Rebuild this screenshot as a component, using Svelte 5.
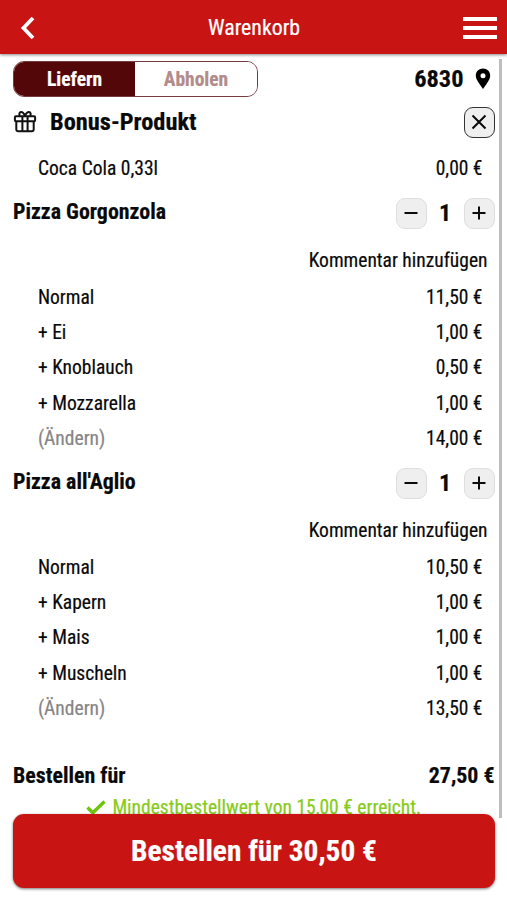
<script>
  const products = [
    { name: 'Pizza Gorgonzola', qty: 1, items: [['Normal', '11,50 €'], ['+ Ei', '1,00 €'], ['+ Knoblauch', '0,50 €'], ['+ Mozzarella', '1,00 €']], total: '14,00 €' },
    { name: "Pizza all'Aglio", qty: 1, items: [['Normal', '10,50 €'], ['+ Kapern', '1,00 €'], ['+ Mais', '1,00 €'], ['+ Muscheln', '1,00 €']], total: '13,50 €' }
  ];
</script>

<div class="app">
  <header>
    <svg class="back" width="16" height="24" viewBox="0 0 16 24"><path d="M13 2 L3.500 12 L13 22" fill="none" stroke="#fff" stroke-width="3.800" /></svg>
    <h1>Warenkorb</h1>
    <div class="menu"><i></i><i></i><i></i></div>
  </header>

  <main>
    <div class="top">
      <div class="tabs">
        <button class="tab active">Liefern</button>
        <button class="tab">Abholen</button>
      </div>
      <div class="zip">
        <span>6830</span>
        <svg width="16" height="22" viewBox="0 0 16 22"><path fill-rule="evenodd" d="M8 .5C3.900.5.8 3.600.8 7.600c0 2.900 1.300 4.800 3.700 8.500L8 21l3.500-4.900c2.400-3.700 3.700-5.600 3.700-8.500C15.200 3.600 12.100.5 8 .5zM8 5.200a2.500 2.500 0 1 1 0 5A2.500 2.500 0 0 1 8 5.200z" /></svg>
      </div>
    </div>

    <div class="bonus">
      <svg width="24" height="22" viewBox="0 0 24 22" fill="none" stroke="#111" stroke-width="2"><rect x="1.900" y="5.300" width="20.200" height="4.900" rx="1" /><path d="M3.300 10.200V18.500a1.800 1.800 0 0 0 1.800 1.800H18.900a1.800 1.800 0 0 0 1.800-1.800V10.200M9.400 5.300V20M14.600 5.300V20M12 5C11 2.500 10 1.100 8.200 1.100 6.200 1.100 5.600 3.700 7.200 5M12 5c1-2.500 2-3.900 3.800-3.900 2 0 2.600 2.600 1 3.900" /></svg>
      <h2>Bonus-Produkt</h2>
      <button class="sq close"><svg width="16" height="16" viewBox="0 0 16 16"><path d="M1.500 1.500l13 13M14.500 1.500l-13 13" /></svg></button>
    </div>
    <div class="row first"><span>Coca Cola 0,33l</span><span>0,00 €</span></div>

    {#each products as product}
      <section>
        <div class="product">
          <h3>{product.name}</h3>
          <button class="sq"><svg width="16" height="16" viewBox="0 0 16 16"><path d="M1.500 8h13" /></svg></button>
          <b class="qty">{product.qty}</b>
          <button class="sq"><svg width="16" height="16" viewBox="0 0 16 16"><path d="M1.500 8h13M8 1.500v13" /></svg></button>
        </div>
        <div class="comment"><span>Kommentar hinzufügen</span></div>
        {#each product.items as [label, price]}
          <div class="row"><span>{label}</span><span>{price}</span></div>
        {/each}
        <div class="row"><span class="edit">(Ändern)</span><span>{product.total}</span></div>
      </section>
    {/each}

    <div class="sum"><span>Bestellen für</span><span>27,50 €</span></div>
    <div class="minimum">
      <svg width="20" height="15" viewBox="0 0 20 15"><path d="M1.500 7.500l5.300 5.300L18.500 1.500" fill="none" stroke="#6fc50c" stroke-width="3.400" /></svg>
      <span>Mindestbestellwert von 15,00 € erreicht.</span>
    </div>
  </main>
  <div class="scrollbar"></div>
  <button class="order"><span>Bestellen für 30,50 €</span></button>
</div>

<style>
  :global(body) { background: #fff; }
  .app { position: relative; height: 900px; overflow: hidden; color: #090909; font-family: "Roboto Condensed", Roboto, sans-serif; font-stretch: 75%; font-size: 19.500px; line-height: 24px; white-space: nowrap; -webkit-text-stroke: 0.2px currentColor; }
  button { font: inherit; font-stretch: 75%; padding: 0; border: 0; box-sizing: border-box; color: inherit; }
  h1, h2, h3 { margin: 0; }
  svg { display: block; flex: none; }
  header { position: relative; height: 54px; background: #c81513; box-shadow: 0 1px 3px #0007; display: grid; grid-template-columns: 1fr auto 1fr; align-items: center; padding: 1px 10px 0 20px; box-sizing: border-box; }
  h1 { color: #fff; font-size: 21.800px; font-weight: 400; padding-right: 9px; }
  .menu { justify-self: end; display: flex; flex-direction: column; gap: 5px; }
  .menu i { width: 34px; height: 4px; background: #fff; }
  main { padding: 7px 12.500px 0 13px; }
  .top { display: flex; justify-content: space-between; height: 36px; }
  .tabs { display: flex; width: 245px; box-sizing: border-box; border: 1px solid #763c40; border-radius: 11px; overflow: hidden; }
  .tab { flex: 1; background: #fff; color: #b38b8b; font-weight: 700; padding-top: 2px; }
  .tab.active { flex: 0 0 121px; background: #530708; color: #fff; }
  .zip { display: flex; align-items: center; gap: 11px; font-size: 24.400px; font-weight: 700; padding-right: 4px; }
  .bonus { display: flex; align-items: center; height: 50px; }
  h2 { font-size: 24.400px; margin-left: 13px; flex: 1; }
  .sq { width: 31px; height: 31px; display: flex; align-items: center; justify-content: center; background: #efefef; border: 1px solid #dedede; border-radius: 9px; }
  .sq path { stroke: #0b0b0b; stroke-width: 2; fill: none; }
  .close { border-color: #333; }
  .row { display: flex; align-items: center; justify-content: space-between; height: 35.400px; padding: 0 12px 0 25px; }
  .row.first { height: 42px; padding-top: 2px; box-sizing: border-box; }
  .edit { color: #858585; }
  section { height: 270px; }
  .product { display: flex; align-items: center; height: 48px; }
  h3 { font-size: 21.900px; flex: 1; padding-bottom: 2px; }
  .qty { width: 37px; text-align: center; font-size: 24px; }
  .comment { display: flex; justify-content: flex-end; align-items: center; height: 48px; padding-right: 7px; box-sizing: border-box; }
  .comment + .row { margin-top: -5px; }
  .sum { display: flex; align-items: center; justify-content: space-between; height: 32px; margin-top: 31px; font-size: 21.900px; font-weight: 700; }
  .minimum { display: flex; align-items: center; justify-content: center; gap: 6px; color: #86cb19; height: 32px; }
  .minimum svg { margin-top: -2px; }
  .scrollbar { position: absolute; right: 5px; top: 59px; width: 3px; height: 759px; background: #bdbdbd; }
  .order { position: absolute; left: 13px; top: 814px; width: 482px; height: 74px; border-radius: 11px; background: #c81513; color: #fff; font-size: 29.400px; font-weight: 700; box-shadow: 0 1px 3px #0008; }
</style>
